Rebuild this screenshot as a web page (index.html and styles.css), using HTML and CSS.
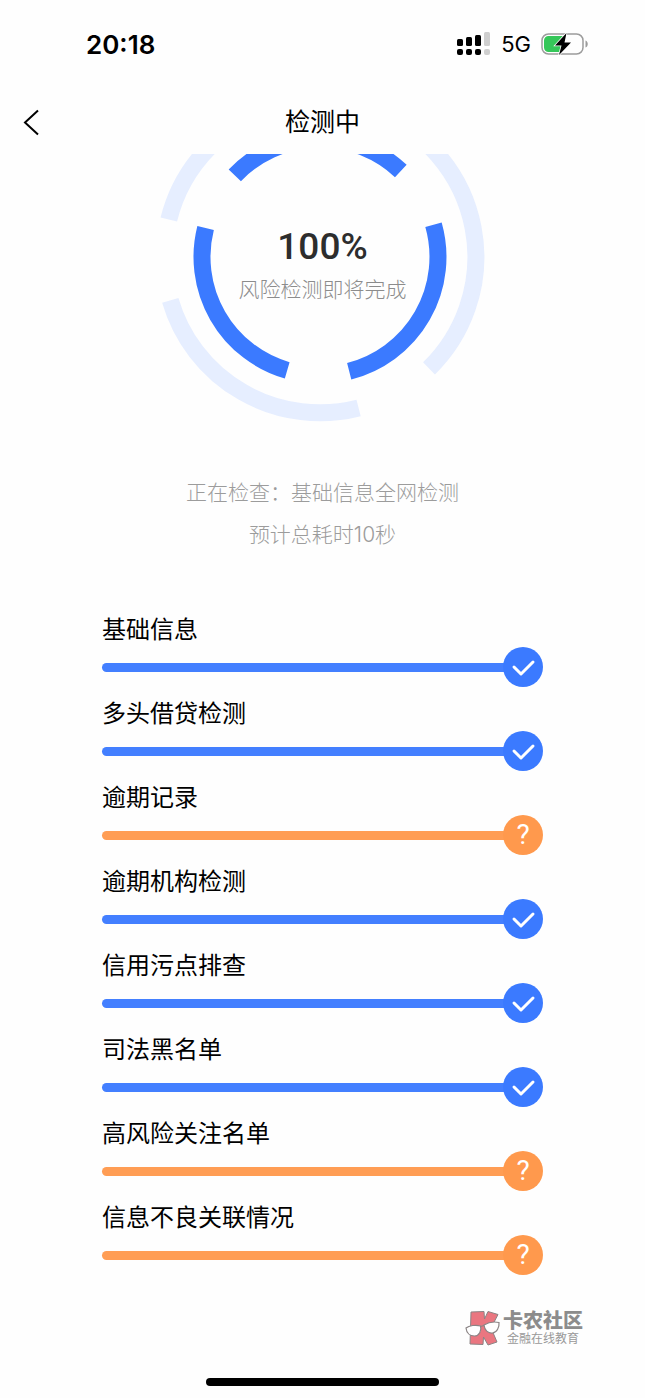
FILE: index.html
```html
<!DOCTYPE html>
<html lang="zh-CN">
<head>
    <meta charset="UTF-8">
    <meta name="viewport" content="width=device-width, initial-scale=1.0">
    <link rel="stylesheet" href="styles.css">
    <title>检测中</title>
</head>
<body>
    <div class="status-bar">
        <span class="time">20:18</span>
        <div class="status-icons">
            <svg class="signal" width="34" height="24" viewBox="0 0 34 24">
                <rect x="0" y="7" width="6" height="7" rx="1.5"/>
                <rect x="9" y="5" width="6" height="9" rx="1.5"/>
                <rect x="18" y="3" width="6" height="11" rx="1.5"/>
                <rect x="27" y="0" width="6" height="14" rx="1.5" fill="#cfcfcf"/>
                <rect x="0" y="17" width="6" height="6" rx="2"/>
                <rect x="9" y="17" width="6" height="6" rx="2"/>
                <rect x="18" y="17" width="6" height="6" rx="2"/>
                <rect x="27" y="17" width="6" height="6" rx="2" fill="#cfcfcf"/>
            </svg>
            <span class="network">5G</span>
            <svg class="battery" width="48" height="24" viewBox="0 0 48 24">
                <rect x="1" y="2" width="41" height="20" rx="6.5" fill="none" stroke="#9c9c9c" stroke-width="1.5"/>
                <path d="M7.5 4H22v16H7.5A4.5 4.5 0 0 1 3 15.5v-7A4.5 4.5 0 0 1 7.5 4z" fill="#35c759"/>
                <path d="M44.5 8.5c3 1 3 6 0 7z" fill="#9c9c9c"/>
                <path d="M25.5 1L14 13.5h6.5L18 23L30 10.5h-6.5z" fill="#000" stroke="#fff" stroke-width="1.5" paint-order="stroke"/>
            </svg>
        </div>
    </div>

    <header class="nav">
        <button class="back" aria-label="返回">
            <svg width="17" height="27" viewBox="0 0 17 27">
                <path d="M15 1.5L2 13.5L15 25.5" fill="none" stroke="#000" stroke-width="2"/>
            </svg>
        </button>
        <h1>检测中</h1>
    </header>

    <main>
        <section class="gauge">
            <svg class="rings" width="341" height="270" viewBox="0 0 341 270">
                <g transform="translate(168 103)" fill="none" stroke-width="17">
                    <g stroke="#e6eeff">
                        <path d="M-151.2 -37.5A155.8 155.8 0 0 1 -40 -150.6"/>
                        <path d="M60 -143.8A155.8 155.8 0 0 1 109 111.4"/>
                        <path d="M-149.7 43.3A155.8 155.8 0 0 0 38.6 150.9"/>
                    </g>
                    <g stroke="#3b7aff">
                        <path d="M-85.2 -81.7A118 118 0 0 1 80.8 -86"/>
                        <path d="M-114.4 -29A118 118 0 0 0 -32.8 113.3"/>
                        <path d="M113.5 -32.2A118 118 0 0 1 29.2 114.3"/>
                    </g>
                </g>
            </svg>
            <div class="gauge-text">
                <strong>100%</strong>
                <span>风险检测即将完成</span>
            </div>
        </section>

        <div class="progress-note">
            <p>正在检查：基础信息全网检测</p>
            <p>预计总耗时10秒</p>
        </div>

        <ul class="checks">
            <li class="check">
                <span class="label">基础信息</span>
                <div class="track"><svg class="mark" viewBox="0 0 40 40"><path d="M11 20L18 27L30 15"/></svg></div>
            </li>
            <li class="check">
                <span class="label">多头借贷检测</span>
                <div class="track"><svg class="mark" viewBox="0 0 40 40"><path d="M11 20L18 27L30 15"/></svg></div>
            </li>
            <li class="check warn">
                <span class="label">逾期记录</span>
                <div class="track"><span class="mark">?</span></div>
            </li>
            <li class="check">
                <span class="label">逾期机构检测</span>
                <div class="track"><svg class="mark" viewBox="0 0 40 40"><path d="M11 20L18 27L30 15"/></svg></div>
            </li>
            <li class="check">
                <span class="label">信用污点排查</span>
                <div class="track"><svg class="mark" viewBox="0 0 40 40"><path d="M11 20L18 27L30 15"/></svg></div>
            </li>
            <li class="check">
                <span class="label">司法黑名单</span>
                <div class="track"><svg class="mark" viewBox="0 0 40 40"><path d="M11 20L18 27L30 15"/></svg></div>
            </li>
            <li class="check warn">
                <span class="label">高风险关注名单</span>
                <div class="track"><span class="mark">?</span></div>
            </li>
            <li class="check warn">
                <span class="label">信息不良关联情况</span>
                <div class="track"><span class="mark">?</span></div>
            </li>
        </ul>
    </main>

    <footer>
        <div class="brand">
            <svg width="36" height="36" viewBox="0 0 36 36">
                <path d="M6 2L19 1.5L19.5 9L23 1.5L33 4.5L26 18L32 32L23 35L18.5 27L18 34.5L5 34z" fill="#ea7680" stroke="#8b8485"/>
                <g fill="#fff" stroke="#8b8485" stroke-width="1.2">
                    <path d="M1 18C4 15.5 11 14.5 15.5 16C17 20.5 14 26 9.5 26C5 26 1.5 23 1 18z"/>
                    <path d="M19 15C23 12.5 29 11.500 34 12.5C34.500 17 32 22.500 27.500 23C23 23.500 19.500 20 19 15z"/>
                    <path d="M15.5 16.5L19 15.5"/>
                </g>
            </svg>
            <div class="brand-text">
                <span class="brand-name">卡农社区</span>
                <span class="brand-sub">金融在线教育</span>
            </div>
        </div>
        <div class="home-bar"></div>
    </footer>
</body>
</html>
```
FILE: styles.css
```css
* {
    box-sizing: border-box;
}

body {
    margin: 0;
    background-color: #fefefe;
    color: #000;
    font-family: Inter, 'Noto Sans CJK SC', sans-serif;
}

.status-bar {
    display: flex;
    justify-content: space-between;
    align-items: center;
    height: 88px;
    padding: 0 56px 0 86px;
}

.time {
    font-size: 26px;
    font-weight: 600;
}

.status-icons {
    display: flex;
    align-items: center;
    gap: 10px;
}

.network {
    font-size: 22px;
}

.nav {
    display: grid;
    grid-template-columns: 64px 1fr 64px;
    align-items: center;
    height: 66px;
    padding-top: 2px;
}

.back {
    display: flex;
    justify-self: start;
    padding: 0 0 0 23px;
    border: none;
    background: none;
    cursor: pointer;
}

h1 {
    margin: 0;
    font-size: 25px;
    font-weight: 400;
    line-height: 36px;
    text-align: center;
}

.gauge {
    display: grid;
    justify-items: center;
}

.rings,
.gauge-text {
    grid-area: 1 / 1;
}

.gauge-text {
    display: flex;
    flex-direction: column;
    align-items: center;
    padding-top: 69px;
}

.gauge-text strong {
    color: #2d2d2d;
    font-family: Roboto, sans-serif;
    font-size: 37px;
    font-weight: 500;
    line-height: 48px;
}

.gauge-text span {
    color: #8c8c8c;
    font-size: 21px;
    font-weight: 300;
    line-height: 38px;
}

.progress-note {
    margin: 48px 0 57px;
    color: #9c9c9c;
    font-size: 21px;
    font-weight: 300;
    line-height: 42px;
    text-align: center;
}

.progress-note p {
    margin: 0;
}

.checks {
    display: flex;
    flex-direction: column;
    gap: 10px;
    margin: 0;
    padding: 0 102px;
    list-style: none;
}

.label {
    display: block;
    font-size: 24px;
    line-height: 34px;
}

.track {
    display: flex;
    align-items: center;
    color: #3b7aff;
}

.track::before {
    content: "";
    flex: 1;
    height: 9px;
    margin-right: -2px;
    border-radius: 5px 0 0 5px;
    background-color: currentColor;
    opacity: 0.96;
}

.mark {
    width: 40px;
    height: 40px;
    border-radius: 50%;
    background-color: #3b7aff;
}

.mark path {
    fill: none;
    stroke: #fff;
    stroke-width: 3;
    stroke-linecap: round;
    stroke-linejoin: round;
}

.warn .track {
    color: #ff994d;
}

.warn .mark {
    background-color: #ff994d;
    color: #fff;
    font-family: Roboto, sans-serif;
    font-size: 28px;
    font-weight: 400;
    line-height: 40px;
    text-align: center;
}

.brand {
    display: flex;
    justify-content: flex-end;
    align-items: center;
    gap: 2px;
    padding: 35px 62px 0 0;
}

.brand-text {
    display: flex;
    flex-direction: column;
    color: #8c8c8c;
}

.brand-name {
    font-size: 20px;
    font-weight: 900;
    line-height: 22px;
}

.brand-sub {
    color: #999;
    font-size: 12px;
    line-height: 14px;
    text-align: center;
}

.home-bar {
    width: 36%;
    height: 8px;
    margin: 32px auto 12px;
    border-radius: 4px;
    background-color: #000;
}
```
